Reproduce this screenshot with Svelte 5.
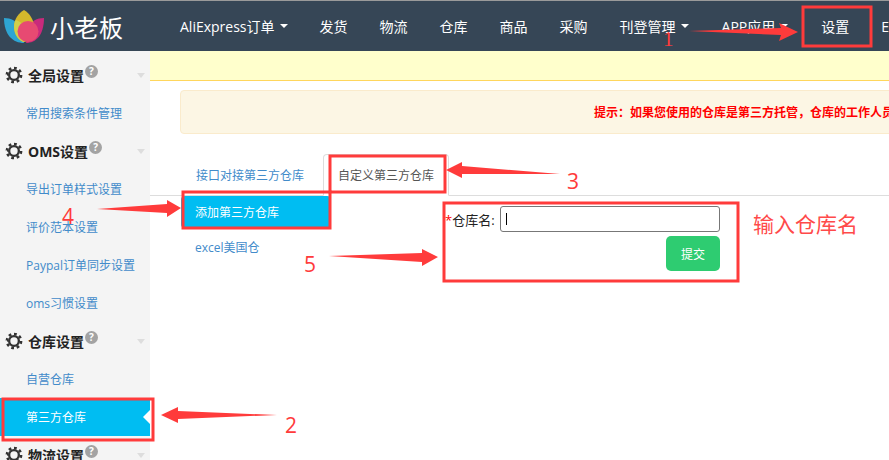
<script>
	const nav = [
		{ label: 'AliExpress订单', caret: true },
		{ label: '发货' },
		{ label: '物流' },
		{ label: '仓库' },
		{ label: '商品' },
		{ label: '采购' },
		{ label: '刊登管理', caret: true },
		{ label: 'APP应用', caret: true },
		{ label: '设置' },
		{ label: 'ERP' }
	];

	const menu = [
		{ title: '全局设置', links: ['常用搜索条件管理'] },
		{ title: 'OMS设置', links: ['导出订单样式设置', '评价范本设置', 'Paypal订单同步设置', 'oms习惯设置'] },
		{ title: '仓库设置', links: ['自营仓库', '第三方仓库'] },
		{ title: '物流设置', links: [] }
	];

	const boxes = [
		{ x: 803, y: 7, w: 68, h: 39 },
		{ x: 3, y: 399, w: 150, h: 41 },
		{ x: 330, y: 156, w: 115, h: 36 },
		{ x: 183, y: 192, w: 147, h: 36 },
		{ x: 444, y: 203, w: 294, h: 78 }
	];

	const arrows = [
		'689,31 781,28 779,23 798,32 779,41 781,35',
		'277,415 178,411 178,407 161,415 178,423 178,419',
		'560,174 462,166 462,162 446,170 462,178 462,174',
		'97,209 167,204 167,200 181,208 167,217 167,213',
		'329,256 422,253 422,249 438,257 422,266 422,262'
	];

	const numbers = [
		{ n: 1, x: 663, y: 46, serif: true },
		{ n: 2, x: 285, y: 433 },
		{ n: 3, x: 567, y: 189 },
		{ n: 4, x: 62, y: 224 },
		{ n: 5, x: 304, y: 272 }
	];
</script>

<div class="page">
	<header class="topbar">
		<div class="brand">
			<svg class="logo" viewBox="0 0 46 34" width="46" height="34">
				<path d="M0 8 C7 8 13 11 15 17 L20 33 C9 33 0 25 0 8 Z" fill="#2ea5d3" />
				<path d="M40 8 C33 8 27 11 25 17 L22 33 C32 33 40 25 40 8 Z" fill="#c92a7c" />
				<path d="M20 0 C25 3 30 9 30 17 C30 25 25 31 20 32 C15 31 10 25 10 16 C10 9 15 3 20 0 Z" fill="#d4b82c" />
				<path d="M12 10 C18 12 22 17 22 24 C22 28 21 31 20 32 C15 31 10 25 10 16 C10 14 11 11 12 10 Z" fill="#cfcf4a" />
				<circle cx="24" cy="21.5" r="10.5" fill="#e74a72" />
			</svg>
			<span class="brand-name">小老板</span>
		</div>
		<nav class="nav">
			{#each nav as item}
				<span class="nav-item">
					{item.label}
					{#if item.caret}<i class="nav-caret"></i>{/if}
				</span>
			{/each}
		</nav>
	</header>

	<div class="body">
		<aside class="sidebar">
			{#each menu as group}
				<div class="group-title">
					<svg class="gear" viewBox="0 0 20 20" width="18" height="18">
						<circle cx="10" cy="10" r="7.8" fill="none" stroke="#333" stroke-width="3" pathLength="16" stroke-dasharray="1 1" />
						<circle cx="10" cy="10" r="5.4" fill="none" stroke="#333" stroke-width="2.6" />
					</svg>
					<span class="group-name">{group.title}</span>
					<span class="help">?</span>
					<i class="group-caret"></i>
				</div>
				{#each group.links as link}
					<div class="side-link" class:active={link === '第三方仓库'}>{link}</div>
				{/each}
			{/each}
		</aside>

		<main class="content">
			<div class="notice"></div>
			<div class="alert">提示：如果您使用的仓库是第三方托管，仓库的工作人员</div>

			<div class="tabs">
				<span class="tab">接口对接第三方仓库</span>
				<span class="tab current">自定义第三方仓库</span>
			</div>

			<div class="panel">
				<div class="pills">
					<div class="pill active">添加第三方仓库</div>
					<div class="pill">excel美国仓</div>
				</div>
				<form class="form">
					<div class="field">
						<label for="warehouse"><span class="star">*</span>仓库名:</label>
						<div class="input-wrap">
							<input id="warehouse" type="text" />
							<i class="text-caret"></i>
						</div>
					</div>
					<button type="button" class="submit">提交</button>
				</form>
			</div>
		</main>
	</div>

	<svg class="marks" width="889" height="460" viewBox="0 0 889 460">
		{#each boxes as b}
			<rect x={b.x} y={b.y} width={b.w} height={b.h} fill="none" stroke="#ff3b3b" stroke-width="3" />
		{/each}
		{#each arrows as points}
			<polygon {points} fill="#ff3b3b" />
		{/each}
		{#each numbers as item}
			<text x={item.x} y={item.y} class="mark-number" class:serif={item.serif}>{item.n}</text>
		{/each}
		<text x="753" y="232" class="mark-note">输入仓库名</text>
	</svg>
</div>

<style>
	:global(body) {
		margin: 0;
		background: #fff;
	}

	.page {
		position: relative;
		width: 889px;
		height: 460px;
		overflow: hidden;
		font-family: "Open Sans", "Noto Sans CJK SC", sans-serif;
		font-size: 12px;
		color: #333;
	}

	.topbar {
		display: flex;
		height: 50px;
		border-top: 1px solid #9a9a9a;
		background: #364656;
		color: #fff;
	}

	.brand {
		display: flex;
		align-items: center;
		width: 164px;
		flex: none;
		padding-left: 4px;
		box-sizing: border-box;
	}

	.logo {
		flex: none;
		margin-top: 1px;
	}

	.brand-name {
		font-size: 24px;
		letter-spacing: 0.5px;
		white-space: nowrap;
	}

	.nav {
		display: flex;
		align-items: center;
		white-space: nowrap;
	}

	.nav-item {
		display: flex;
		align-items: center;
		padding: 0 16px;
		font-size: 14px;
	}

	.nav-item:first-child {
		padding-right: 15px;
	}

	.nav-caret {
		width: 0;
		height: 0;
		margin: 0 1px 0 5px;
		border: 4px solid transparent;
		border-top-color: #fff;
		border-bottom-width: 0;
	}

	.body {
		display: flex;
		height: 409px;
	}

	.sidebar {
		flex: none;
		width: 150px;
		padding-top: 5px;
		background: #f4f4f4;
		overflow: hidden;
	}

	.group-title {
		display: flex;
		align-items: center;
		height: 38px;
		padding-left: 5px;
		font-size: 14px;
		font-weight: 700;
		color: #222;
	}

	.gear {
		flex: none;
		margin-right: 5px;
	}

	.group-name {
		white-space: nowrap;
	}

	.help {
		flex: none;
		width: 13px;
		height: 13px;
		margin: -7px 0 0 1px;
		border-radius: 50%;
		background: #a3a3a3;
		color: #fff;
		font-size: 10px;
		font-weight: 700;
		line-height: 13px;
		text-align: center;
	}

	.group-caret {
		width: 0;
		height: 0;
		margin-left: auto;
		margin-right: 5px;
		border: 4px solid transparent;
		border-top: 5px solid #ddd;
		border-bottom-width: 0;
	}

	.side-link {
		position: relative;
		display: flex;
		align-items: center;
		height: 38px;
		padding-left: 26px;
		color: #428bca;
		white-space: nowrap;
	}

	.side-link.active {
		background: #00bdf2;
		color: #fff;
	}

	.side-link.active::after {
		content: '';
		position: absolute;
		right: 0;
		top: 12px;
		border: 7px solid transparent;
		border-right-color: #fff;
		border-left-width: 0;
	}

	.content {
		flex: 1;
		min-width: 0;
		overflow: hidden;
	}

	.notice {
		height: 29px;
		background: #ffc;
		border-bottom: 1px solid #ffd65c;
	}

	.alert {
		display: flex;
		align-items: center;
		height: 42px;
		margin: 9px -20px 0 30px;
		padding-left: 413px;
		border: 1px solid #faebcc;
		border-radius: 4px;
		background: #fcf6e4;
		color: #f00;
		font-weight: 700;
		white-space: nowrap;
	}

	.tabs {
		display: flex;
		height: 41px;
		margin-top: 20px;
		border-bottom: 1px solid #ddd;
	}

	.tab {
		display: flex;
		align-items: center;
		padding: 0 14px;
		margin-left: 32px;
		color: #428bca;
	}

	.tab.current {
		margin-left: 5px;
		margin-bottom: -1px;
		border: 1px solid #ddd;
		border-bottom-color: #fff;
		border-radius: 4px 4px 0 0;
		color: #555;
	}

	.panel {
		display: flex;
		padding-left: 31px;
	}

	.pills {
		flex: none;
		width: 150px;
	}

	.pill {
		display: flex;
		align-items: center;
		height: 32px;
		margin-bottom: 3px;
		padding-left: 14px;
		border-radius: 4px;
		color: #428bca;
	}

	.pill.active {
		background: #00bdf2;
		color: #fff;
	}

	.form {
		display: flex;
		flex-direction: column;
		align-items: flex-end;
		width: 275px;
		margin: 10px 0 0 114px;
	}

	.field {
		display: flex;
		align-items: center;
		width: 100%;
		justify-content: space-between;
	}

	.field label {
		color: #222;
		font-size: 13px;
		white-space: nowrap;
	}

	.star {
		color: #f00;
	}

	.input-wrap {
		position: relative;
		width: 220px;
		height: 26px;
	}

	.input-wrap input {
		display: block;
		width: 100%;
		height: 100%;
		box-sizing: border-box;
		border: 1px solid #777;
		border-radius: 3px;
		background: #fff;
	}

	.text-caret {
		position: absolute;
		left: 6px;
		top: 7px;
		width: 1px;
		height: 12px;
		background: #000;
	}

	.submit {
		width: 54px;
		height: 35px;
		margin-top: 4px;
		border: 0;
		border-radius: 5px;
		background: #2ecc71;
		color: #fff;
		font-family: inherit;
		font-size: 12px;
	}

	.marks {
		position: absolute;
		left: 0;
		top: 0;
		pointer-events: none;
	}

	.mark-number {
		fill: #ff3b3b;
		font-family: "Open Sans", sans-serif;
		font-size: 21px;
	}

	.mark-number.serif {
		font-family: "Liberation Serif", serif;
	}

	.mark-note {
		fill: #ff4a4a;
		font-family: "Noto Sans CJK SC", sans-serif;
		font-size: 21px;
	}
</style>
